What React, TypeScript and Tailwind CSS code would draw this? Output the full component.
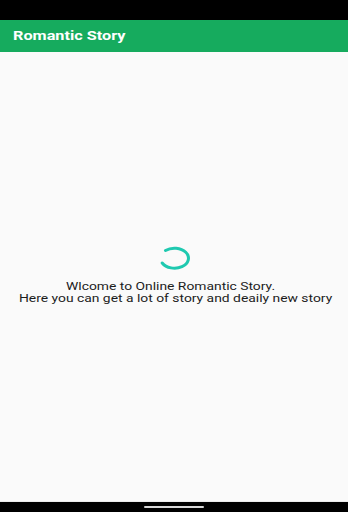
import React from "react";

const Spinner = () => (
  <svg width="34" height="24" viewBox="0 0 34 24" className="block">
    {/* arc with gap on the left side, like the android progress ring */}
    <path
      d="M 8.5 4.5 A 14 10 0 1 1 5.2 17"
      fill="none"
      stroke="#1fc9b0"
      strokeWidth="3"
      strokeLinecap="round"
    />
  </svg>
);

export default function App() {
  return (
    <div
      className="w-[348px] h-[512px] flex flex-col bg-[#fafafa] overflow-hidden"
      style={{ fontFamily: "Roboto, 'Liberation Sans', sans-serif" }}
    >
      {/* status bar */}
      <div className="h-[20px] bg-black shrink-0" />

      {/* toolbar */}
      <div className="h-[32px] bg-[#16ab5e] shrink-0 flex items-center pl-[13px]">
        <span className="text-white font-bold text-[13px] origin-left scale-x-[1.25] inline-block">
          Romantic Story
        </span>
      </div>

      {/* content */}
      <div className="flex-1 flex flex-col items-center justify-center border-b border-[#ececec]">
        <div className="flex flex-col items-center gap-[11px] -mt-[2px]">
          <Spinner />
          <div className="text-[#1c1c1c] text-[11px] leading-[12px] text-center scale-x-[1.26] whitespace-nowrap">
            <div className="-ml-[6px]">Wlcome to Online Romantic Story.</div>
            <div className="ml-[2px]">Here you can get a lot of story and deaily new story</div>
          </div>
        </div>
      </div>

      {/* navigation bar */}
      <div className="h-[10px] bg-black shrink-0 flex items-center justify-center">
        <div className="w-[60px] h-[2px] rounded-full bg-[#d8d8d8]" />
      </div>
    </div>
  );
}
